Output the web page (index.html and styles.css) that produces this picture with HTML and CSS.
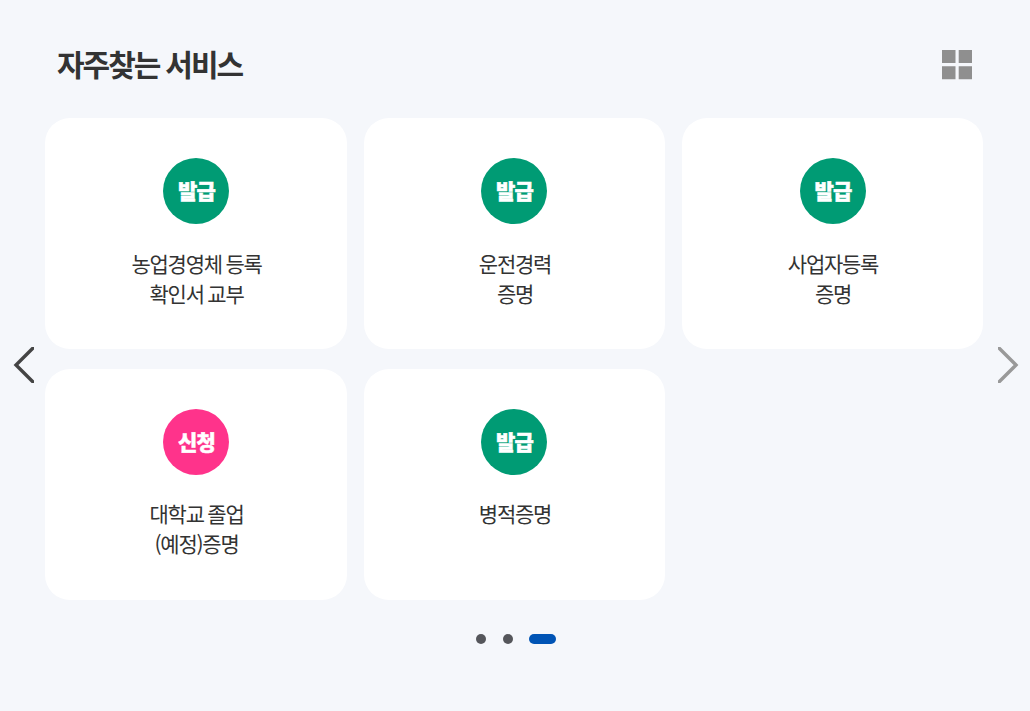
FILE: index.html
```html
<!DOCTYPE html>
<html lang="ko">
<head>
<meta charset="utf-8">
<title>자주찾는 서비스</title>
<link rel="stylesheet" href="styles.css">
</head>
<body>
<section class="services">
  <header class="services-head">
    <h2 class="title">자주찾는 서비스</h2>
    <button class="icon-btn" aria-label="전체보기"><svg width="30" height="30" viewBox="0 0 30 30" fill="#8f8f8f"><path d="M0 0h13.500v13H0zM16.700 0h13.300v13H16.700zM0 16.200h13.500V29.200H0zM16.700 16.200h13.300V29.200H16.700z"/></svg></button>
  </header>
  <div class="slider">
    <button class="icon-btn arrow prev" aria-label="이전"><svg width="21" height="36" viewBox="0 0 21 36" fill="none" stroke="#444" stroke-width="3.400"><path d="M22-1L3 18l19 19"/></svg></button>
    <ul class="cards">
      <li class="card"><span class="badge">발급</span><p class="name">농업경영체 등록<br>확인서 교부</p></li>
      <li class="card"><span class="badge">발급</span><p class="name">운전경력<br>증명</p></li>
      <li class="card"><span class="badge">발급</span><p class="name">사업자등록<br>증명</p></li>
      <li class="card"><span class="badge apply">신청</span><p class="name">대학교 졸업<br>(예정)증명</p></li>
      <li class="card"><span class="badge">발급</span><p class="name">병적증명</p></li>
    </ul>
    <button class="icon-btn arrow next" aria-label="다음"><svg width="21" height="36" viewBox="0 0 21 36" fill="none" stroke="#999" stroke-width="3.400"><path d="M-1-1L18 18L-1 37"/></svg></button>
  </div>
  <div class="dots"><span class="dot"></span><span class="dot"></span><span class="dot active"></span></div>
</section>
</body>
</html>
```
FILE: styles.css
```css
* { box-sizing: border-box; }
body { margin: 0; background: #f5f7fb; color: #333; font-family: "Noto Sans CJK KR", sans-serif; }
.services { height: 711px; padding-top: 44px; }
.services-head { display: flex; justify-content: space-between; align-items: center; height: 42px; padding: 0 58px 0 57px; }
.title { margin: 0; padding-bottom: 4px; font-size: 30px; line-height: 40px; font-weight: 700; letter-spacing: -2px; word-spacing: -0.5px; }
.icon-btn { display: block; padding: 0; border: 0; background: none; }
.icon-btn svg { display: block; }
.slider { display: grid; grid-template-columns: 45px 938px 47px; margin-top: 32px; align-items: center; }
.cards { display: grid; grid-template-columns: 302px 301px 301px; grid-auto-rows: 231px; gap: 20px 17px; margin: 0; padding: 0; list-style: none; }
.card { display: flex; flex-direction: column; align-items: center; padding-top: 40px; background: #fff; border-radius: 25px; }
.badge { width: 66px; height: 66px; border-radius: 50%; background: #009b74; color: #fff; font-size: 21px; line-height: 64px; font-weight: 900; text-align: center; text-indent: 1px; letter-spacing: -0.8px; -webkit-text-stroke: 0.5px #fff; }
.card:nth-child(3n+2) .badge { margin-left: -1px; }
.apply { background: #ff338b; }
.name { margin: 24px 0 0; padding-left: 1px; font-size: 21px; line-height: 30px; letter-spacing: -1.25px; word-spacing: -1px; text-align: center; }
.card:nth-child(n+4) .name { margin-top: 23px; }
.prev { padding-left: 13px; margin-top: 12px; }
.next { padding-left: 15px; margin-top: 12px; }
.dots { display: flex; justify-content: center; align-items: center; gap: 17px; margin-top: 34px; padding-left: 2px; }
.dot { width: 10px; height: 10px; border-radius: 5px; background: #55565b; }
.active { width: 27px; margin-left: -1px; background: #0054b5; }
```
